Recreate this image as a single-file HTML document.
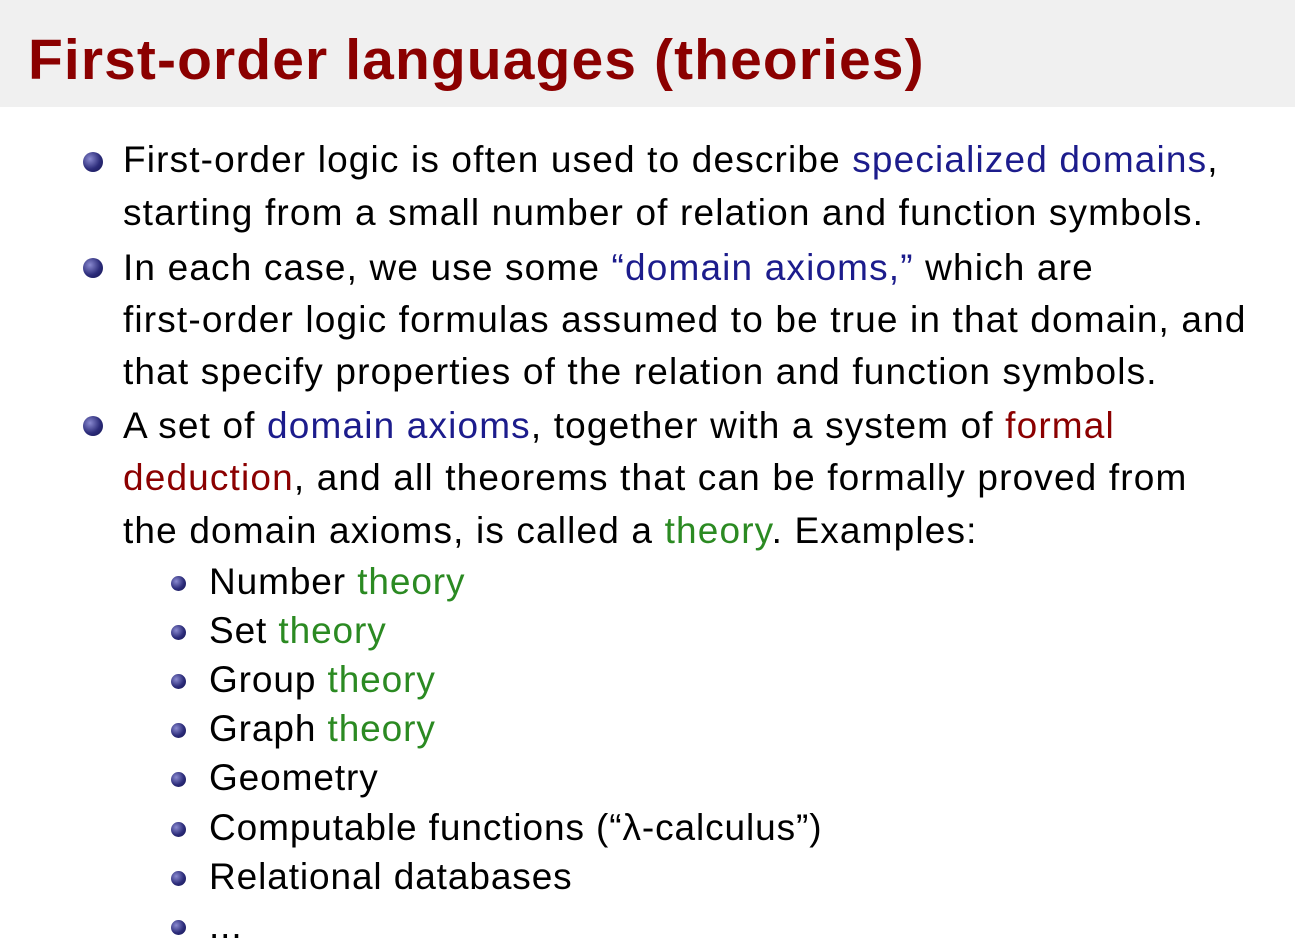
<!DOCTYPE html>
<html><head><meta charset="utf-8"><style>
html,body{margin:0;padding:0;background:#fff;width:1295px;height:947px;overflow:hidden;position:relative;font-family:"Liberation Sans",sans-serif;}
.hdr{position:absolute;left:0;top:0;width:1295px;height:107px;background:#f0f0f0;}
.t{position:absolute;left:28px;top:32px;font-size:57px;font-weight:bold;color:#8b0000;line-height:1;white-space:nowrap;letter-spacing:1.1px;}
.l{position:absolute;left:123px;font-size:37px;line-height:1;white-space:nowrap;color:#000;letter-spacing:1.15px;}
.s{left:209px;letter-spacing:0.9px;}
.b{color:#1c1c8c}.r{color:#8b0000}.g{color:#2b8a22}
.d{position:absolute;border-radius:50%;background:radial-gradient(circle at 35% 35%,#8a8ad0,#2c2c7a 55%,#141450);}
.d1{width:20px;height:20px;left:83px;}
.d2{width:15px;height:15px;left:171px;}
</style></head><body>
<div class="hdr"></div>
<div class="t">First-order languages (theories)</div>

<div class="d d1" style="top:152px"></div>
<div class="l" style="top:141px">First-order logic is often used to describe <span class="b">specialized domains</span>,</div>
<div class="l" style="top:194px">starting from a small number of relation and function symbols.</div>
<div class="d d1" style="top:258px"></div>
<div class="l" style="top:249px">In each case, we use some <span class="b">“domain axioms,”</span> which are</div>
<div class="l" style="top:301px">first-order logic formulas assumed to be true in that domain, and</div>
<div class="l" style="top:353px">that specify properties of the relation and function symbols.</div>
<div class="d d1" style="top:416px"></div>
<div class="l" style="top:407px">A set of <span class="b">domain axioms</span>, together with a system of <span class="r">formal</span></div>
<div class="l" style="top:459px"><span class="r">deduction</span>, and all theorems that can be formally proved from</div>
<div class="l" style="top:512px">the domain axioms, is called a <span class="g">theory</span>. Examples:</div>

<div class="d d2" style="top:576px"></div>
<div class="l s" style="top:563px">Number <span class="g">theory</span></div>
<div class="d d2" style="top:625px"></div>
<div class="l s" style="top:612px">Set <span class="g">theory</span></div>
<div class="d d2" style="top:674px"></div>
<div class="l s" style="top:661px">Group <span class="g">theory</span></div>
<div class="d d2" style="top:723px"></div>
<div class="l s" style="top:710px">Graph <span class="g">theory</span></div>
<div class="d d2" style="top:772px"></div>
<div class="l s" style="top:759px">Geometry</div>
<div class="d d2" style="top:822px"></div>
<div class="l s" style="top:809px">Computable functions (“λ-calculus”)</div>
<div class="d d2" style="top:871px"></div>
<div class="l s" style="top:858px">Relational databases</div>
<div class="d d2" style="top:920px"></div>
<div class="l s" style="top:907px">...</div>
</body></html>
